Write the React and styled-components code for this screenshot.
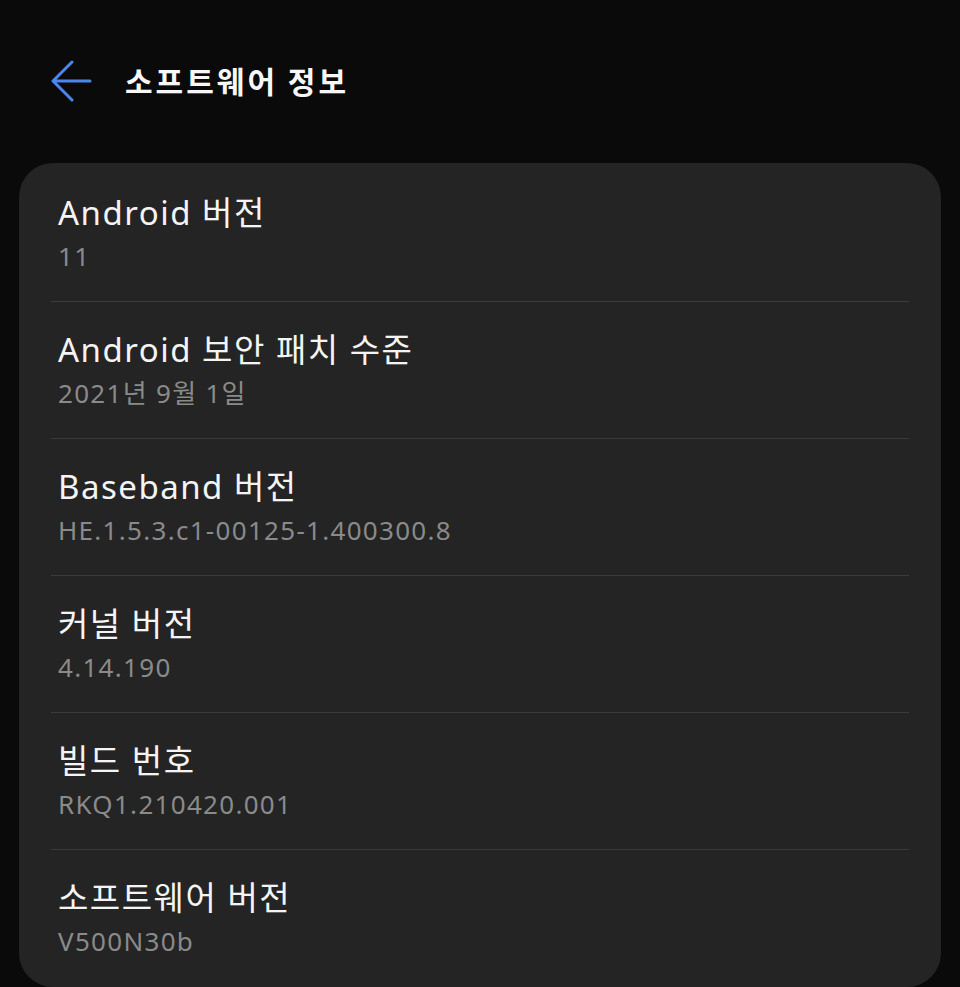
import React from "react";
import styled, { createGlobalStyle } from "styled-components";

const GlobalStyle = createGlobalStyle`
  html, body {
    margin: 0;
    padding: 0;
    background: #0a0a0a;
  }
  body {
    font-family: "Noto Sans", "Noto Sans CJK KR", sans-serif;
    -webkit-font-smoothing: antialiased;
  }
`;

const Screen = styled.div`
  width: 960px;
  height: 987px;
  background: #0a0a0a;
  display: flex;
  flex-direction: column;
  overflow: hidden;
`;

const Header = styled.header`
  height: 163px;
  display: flex;
  align-items: flex-start;
  padding: 60px 0 0 50px;
  box-sizing: border-box;
  gap: 33px;
`;

const BackButton = styled.button`
  width: 42px;
  height: 42px;
  padding: 0;
  border: none;
  background: transparent;
  display: flex;
  align-items: center;
  justify-content: center;
  cursor: pointer;
`;

const Title = styled.h1`
  margin: 0;
  height: 42px;
  line-height: 40px;
  font-size: 30px;
  font-weight: 700;
  color: #f7f7f7;
  letter-spacing: 3px;
  font-family: "Noto Sans CJK KR", sans-serif;
`;

const Card = styled.section`
  margin: 0 19px;
  flex: 1;
  background: #232423;
  border-radius: 34px;
  padding-top: 2px;
  box-sizing: border-box;
`;

const List = styled.ul`
  list-style: none;
  margin: 0 32px;
  padding: 0;
`;

const Item = styled.li`
  padding: 27px 0 27px 7px;
  display: flex;
  flex-direction: column;
  gap: 4px;
  border-bottom: ${(p) => (p.$last ? "none" : "1px solid #3a3b3a")};
`;

const ItemTitle = styled.div`
  height: 42px;
  line-height: 42px;
  font-size: 33px;
  color: #f4f4f4;
  white-space: nowrap;
  letter-spacing: 1.5px;
`;

const ItemValue = styled.div`
  height: 36px;
  line-height: 36px;
  font-size: 26px;
  color: #8a8a8a;
  white-space: nowrap;
  letter-spacing: 1.3px;
`;

const items = [
  { title: "Android 버전", value: "11" },
  { title: "Android 보안 패치 수준", value: "2021년 9월 1일" },
  { title: "Baseband 버전", value: "HE.1.5.3.c1-00125-1.400300.8" },
  { title: "커널 버전", value: "4.14.190" },
  { title: "빌드 번호", value: "RKQ1.210420.001" },
  { title: "소프트웨어 버전", value: "V500N30b" },
];

const BackArrow = () => (
  <svg width="42" height="42" viewBox="0 0 42 42" fill="none">
    <path
      d="M3 21 H40 M22 2 L3 21 L22 40"
      stroke="#4b86ee"
      strokeWidth="3"
      strokeLinecap="round"
      strokeLinejoin="round"
    />
  </svg>
);

export default function App() {
  return (
    <>
      <GlobalStyle />
      <Screen>
        <Header>
          <BackButton aria-label="뒤로">
            <BackArrow />
          </BackButton>
          <Title>소프트웨어 정보</Title>
        </Header>
        <Card>
          <List>
            {items.map((it, i) => (
              <Item key={it.title} $last={i === items.length - 1}>
                <ItemTitle>{it.title}</ItemTitle>
                <ItemValue>{it.value}</ItemValue>
              </Item>
            ))}
          </List>
        </Card>
      </Screen>
    </>
  );
}
